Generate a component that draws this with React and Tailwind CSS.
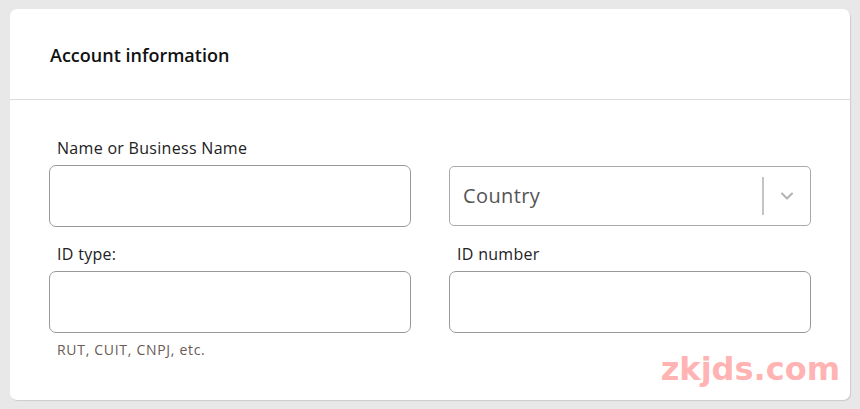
import { ChevronDown } from 'lucide-react';

const Field = ({ label, hint }) => (
  <div className="flex flex-col">
    <label className="pl-2 text-[16px] tracking-[0.3px] leading-[20px] text-[#222] h-[27px]">{label}</label>
    <div className="h-[62px] rounded-[7px] border border-[#999] bg-white" />
    {hint && <div className="pl-2 pt-[8px] text-[14px] tracking-[0.7px] leading-[18px] text-[#6b5a55]">{hint}</div>}
  </div>
);

export default function App() {
  return (
    <div className="min-h-[409px] w-[860px] bg-[#e8e8e8] pt-[9px] pl-[10px]" style={{ fontFamily: '"Open Sans", sans-serif' }}>
      <div className="relative w-[840px] h-[391px] rounded-[7px] bg-white shadow-[1px_1px_1px_rgba(0,0,0,0.12)]">
        <div className="h-[91px] border-b border-[#dcdcdc] flex items-center pl-[40px] pt-[2px]">
          <h2 className="text-[18px] font-semibold text-[#111]">Account information</h2>
        </div>
        <div className="grid grid-cols-2 gap-x-[38px] px-[39px] pt-[38px]">
          <Field label="Name or Business Name" />
          <div className="flex flex-col pt-[28px]">
            <div className="h-[60px] rounded-[5px] border border-[#aaa] flex items-center">
              <span className="flex-1 pl-[13px] text-[20px] tracking-[0.4px] text-[#555]">Country</span>
              <div className="w-[2px] h-[38px] bg-[#c4c4c4]" />
              <div className="w-[46px] flex justify-center">
                <ChevronDown className="w-[20px] h-[20px] text-[#b4b4b4]" strokeWidth={2.5} />
              </div>
            </div>
          </div>
          <div className="mt-[17px]">
            <Field label="ID type:" hint="RUT, CUIT, CNPJ, etc." />
          </div>
          <div className="mt-[17px]">
            <Field label="ID number" />
          </div>
        </div>
        <div className="absolute right-[10px] bottom-[7px] text-[32px] font-bold text-[#ffb3b3]" style={{ fontFamily: '"DejaVu Sans", sans-serif' }}>
          zkjds.com
        </div>
      </div>
    </div>
  );
}
